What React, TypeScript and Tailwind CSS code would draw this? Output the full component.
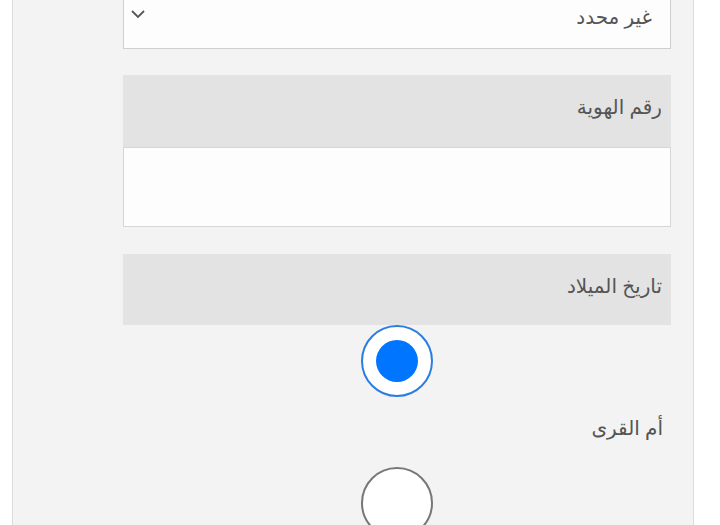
export default function App() {
  return (
    <div className="h-[525px] w-[720px] overflow-hidden bg-white font-['Noto_Sans','DejaVu_Sans',sans-serif]">
      <div
        dir="rtl"
        className="ml-[12px] flex h-full w-[682px] flex-col border-x border-[#dcdcdc] bg-[#f3f3f3] pl-[110px] pr-[22px]"
      >
        {/* select, top cut off */}
        <div className="relative mt-[-32px] h-[81px] shrink-0 border border-[#cfcfcf] bg-[#fdfdfd]">
          <span className="absolute right-[18px] top-[33px] text-[20px] leading-[30px] text-[#555]">
            غير محدد
          </span>
          <svg
            className="absolute left-[6px] top-[39px]"
            width="16"
            height="12"
            viewBox="0 0 16 12"
            fill="none"
          >
            <path d="M2 3l6 6 6-6" stroke="#555" strokeWidth="1.8" />
          </svg>
        </div>

        <div className="mt-[26px] flex h-[72px] shrink-0 items-center bg-[#e3e3e3] pb-[8px] pr-[9px] text-[20px] text-[#555]">
          رقم الهوية
        </div>
        <div className="h-[80px] shrink-0 border border-[#d6d6d6] bg-[#fdfdfd]" />

        <div className="mt-[27px] flex h-[71px] shrink-0 items-center bg-[#e3e3e3] pb-[7px] pr-[9px] text-[20px] text-[#555]">
          تاريخ الميلاد
        </div>

        <div className="flex shrink-0 justify-center">
          <div className="flex h-[72px] w-[72px] items-center justify-center rounded-full border-2 border-[#2a7de1] bg-white">
            <div className="h-[42px] w-[42px] rounded-full bg-[#0075ff]" />
          </div>
        </div>
        <div className="mt-[16px] pr-[8px] text-[20px] leading-[30px] text-[#555]">
          أم القرى
        </div>
        <div className="mt-[24px] flex shrink-0 justify-center">
          <div className="h-[72px] w-[72px] rounded-full border-2 border-[#777] bg-white" />
        </div>
      </div>
    </div>
  );
}
